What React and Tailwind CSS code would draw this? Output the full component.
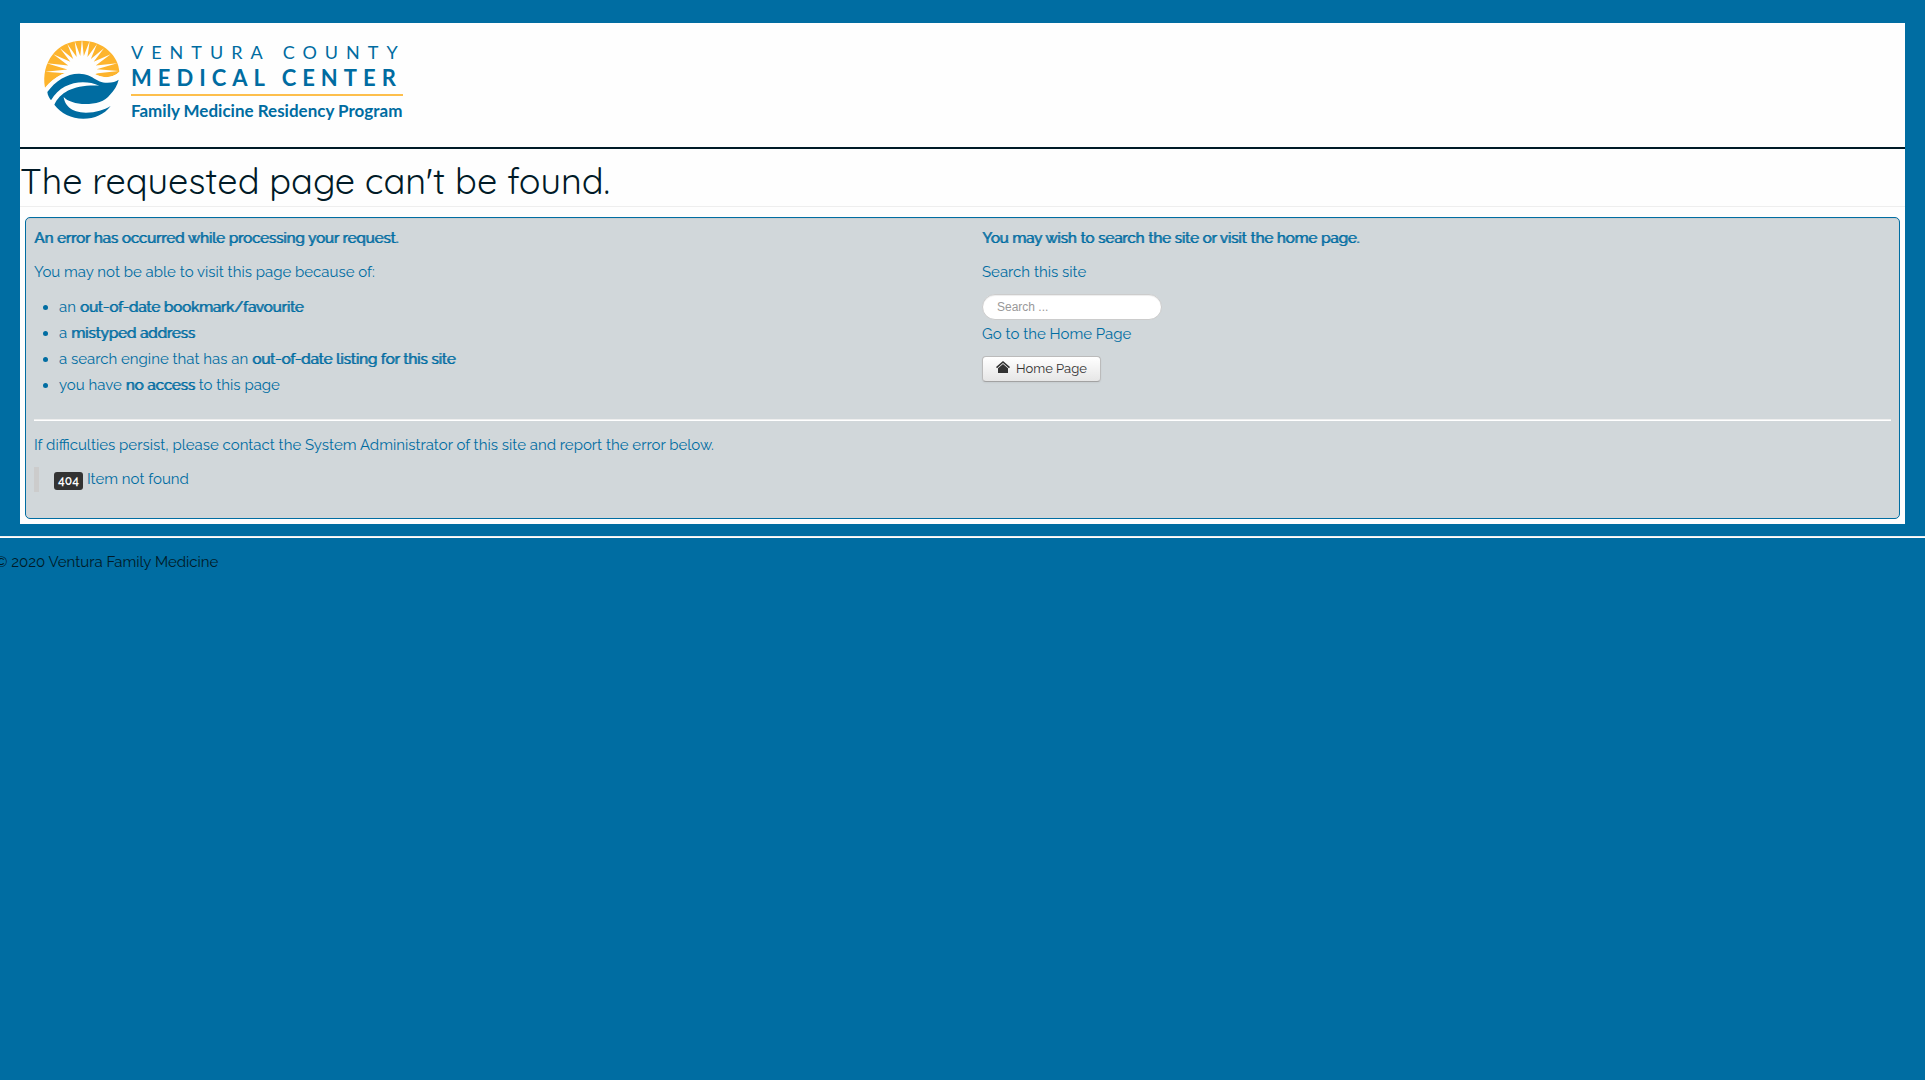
import React from "react";

function LogoMark() {
  const rays = [
    [16, 107], [20, 82], [40, 55], [60, 37], [82, 24], [104, 15], [126, 8],
    [149, 15], [171, 24], [192, 37], [212, 55], [232, 82], [236, 105],
  ];
  const points = rays
    .flatMap(([x, y], i) => {
      const next = rays[i + 1];
      if (!next) return [`${x},${y}`];
      const mx = (x + next[0]) / 2 - 126;
      const my = (y + next[1]) / 2 - 104;
      const k = 44 / Math.hypot(mx, my);
      return [`${x},${y}`, `${126 + mx * k},${104 + my * k}`];
    })
    .join(" ");
  return (
    <svg viewBox="0 0 252 264" className="h-22 w-21 shrink-0" aria-hidden="true">
      <path
        d="M15 155 C2 80 50 14 126 14 C192 14 236 62 238 107 C222 124 196 128 172 118 C130 92 62 98 15 155Z"
        fill="#fdb42d"
      />
      <polygon points={`${points} 174,112 126,126 76,112`} fill="#fefefe" />
      <path d="M14 158 C64 94 130 94 172 118 C200 130 224 122 240 106 L246 134 L190 150 L30 190Z" fill="#fefefe" />
      <path
        d="M22 168 C46 134 82 112 118 113 C160 114 166 140 202 140 C218 140 228 136 236 131 C232 148 222 164 210 176 C196 196 166 204 136 204 C108 204 82 196 71 183 C74 206 92 230 138 230 C168 230 192 222 212 210 C192 236 164 248 130 248 C94 248 62 232 43 206 C62 168 100 146 178 149 C130 128 64 138 33 193 C28 186 23 178 22 168Z"
        fill="#006ca1"
      />
    </svg>
  );
}

function HomeIcon() {
  return (
    <svg viewBox="0 0 14 12" className="mb-1 h-3 w-3.5" fill="#333" aria-hidden="true">
      <path d="M7 0 L14 6 L13 7.2 L7 2.1 L1 7.2 L0 6Z" />
      <path d="M7 3.1 L12 7.3 V12 H2 V7.3Z" />
    </svg>
  );
}

/* Regular weight thickened by one pixel, keeping the regular letter widths. */
function Strong({ children }) {
  return <strong className="font-normal [text-shadow:1px_0_0_currentColor]">{children}</strong>;
}

function Rule({ className }) {
  return <hr className={`border-t border-b border-t-[#eee] border-b-white ${className}`} />;
}

export default function App() {
  return (
    <div className="min-h-screen overflow-x-hidden bg-[#006da2] pt-[23px] font-['Raleway',sans-serif] text-[15px] leading-[25px] text-[#006da2]">
      <div className="mx-5 bg-[#fefefe] pb-[5px]">
        <header className="border-b-2 border-[#001a27] pt-[13px] pb-[23px] pl-5">
          <a
            href="#"
            aria-label="Ventura County Medical Center Family Medicine Residency Program"
            className="flex w-fit gap-[7px] font-['Lato',sans-serif] whitespace-nowrap text-[#006ca1]"
          >
            <LogoMark />
            <span className="flex flex-col pt-1">
              <span className="text-[18px] leading-6 tracking-[8px]">VENTURA COUNTY</span>
              <span className="text-[22px] leading-7 font-bold tracking-[6px]">MEDICAL CENTER</span>
              <span className="mt-[2px] h-[2px] w-[272px] bg-[#fdbf4c]" />
              <span className="mt-[3px] text-[17px] leading-6 font-bold">Family Medicine Residency Program</span>
            </span>
          </a>
        </header>

        <div className="border-b border-[#eee] pt-3 pb-[5px]">
          <h1 className="font-['Quicksand',sans-serif] text-[36px] leading-10 text-[#001a27]">
            The requested page can't be found.
          </h1>
        </div>

        <main className="mx-[5px] mt-[10px] rounded-[5px] border border-[#006da2] bg-[#d1d7da] p-2 shadow-[inset_0_1px_1px_rgba(0,0,0,0.05)]">
          <div className="grid grid-cols-2 gap-[39px]">
            <section>
              <p className="mb-[9px]"><Strong>An error has occurred while processing your request.</Strong></p>
              <p className="mb-[9px]">You may not be able to visit this page because of:</p>
              <ul className="mb-[9px] ml-[25px] list-disc leading-[26px]">
                <li>an <Strong>out-of-date bookmark/favourite</Strong></li>
                <li>a <Strong>mistyped address</Strong></li>
                <li>a search engine that has an <Strong>out-of-date listing for this site</Strong></li>
                <li>you have <Strong>no access</Strong> to this page</li>
              </ul>
            </section>
            <section>
              <p className="mb-[9px]"><Strong>You may wish to search the site or visit the home page.</Strong></p>
              <p className="mb-[9px]"><label htmlFor="search">Search this site</label></p>
              <input
                id="search"
                type="search"
                placeholder="Search ..."
                className="block h-[26px] w-[180px] rounded-full border border-[#ccc] bg-white px-[14px] font-['Liberation_Sans',sans-serif] text-[12px] leading-4 text-[#555] shadow-[inset_0_1px_1px_rgba(0,0,0,0.075)] placeholder:text-[#999]"
              />
              <p className="mt-[2px] mb-[9px]">Go to the Home Page</p>
              <a
                href="#"
                className="flex h-[26px] w-fit items-center gap-[6px] rounded-[4px] border border-[#bbb] border-b-[#a2a2a2] bg-linear-to-b from-white to-[#e6e6e6] px-[13px] text-[13px] leading-[18px] text-[#333] shadow-[0_1px_2px_rgba(0,0,0,0.05)]"
              >
                <HomeIcon />
                Home Page
              </a>
            </section>
          </div>
          <Rule className="my-3" />
          <p className="mb-[9px]">
            If difficulties persist, please contact the System Administrator of this site and report the error below.
          </p>
          <blockquote className="mb-[18px] flex items-center gap-1 border-l-[5px] border-[#ccc] pl-[15px]">
            <span className="mt-[2px] rounded-[3px] bg-[#333] px-1 py-[2px] text-[12px] leading-[14px] font-semibold text-white">404</span>
            <span>Item not found</span>
          </blockquote>
        </main>
      </div>

      <footer>
        <Rule className="mt-3 mb-3" />
        <p className="-ml-[5px] text-[#001a27]">© 2020 Ventura Family Medicine</p>
      </footer>
    </div>
  );
}
